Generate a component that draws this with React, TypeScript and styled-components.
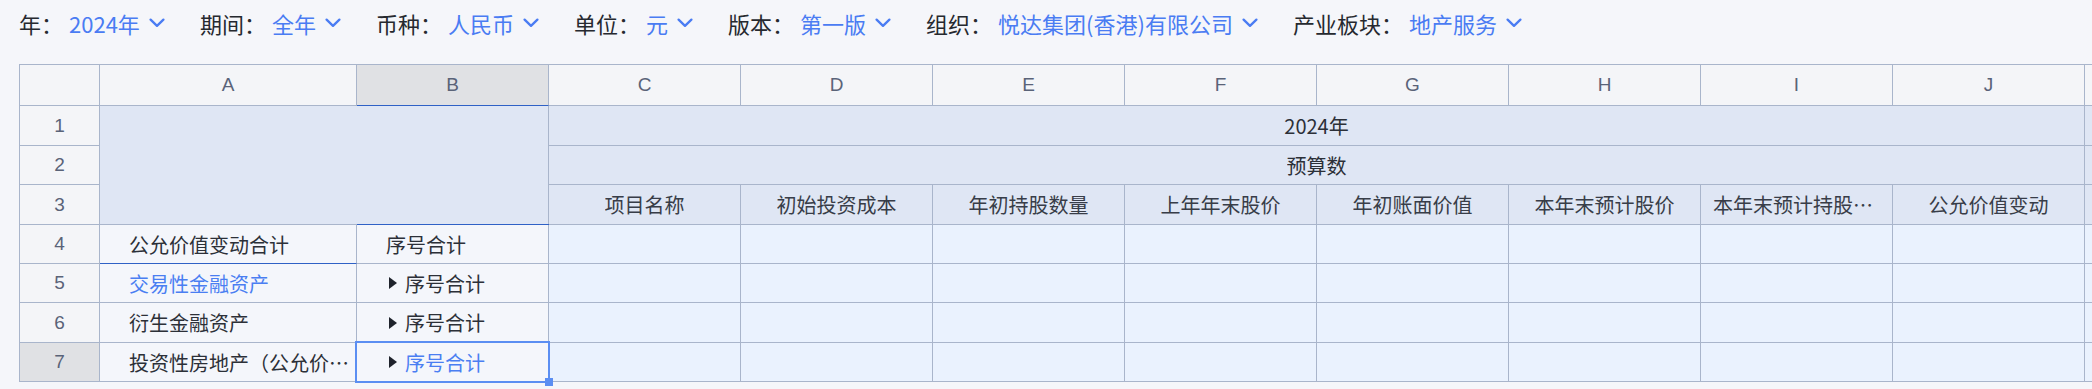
import React from "react";
import styled, { createGlobalStyle, css } from "styled-components";

const GlobalStyle = createGlobalStyle`
  html, body {
    margin: 0;
    padding: 0;
    background: #f5f6fa;
  }
  body {
    width: 2092px;
    height: 389px;
    overflow: hidden;
    font-family: "Noto Sans CJK SC", "Noto Sans", sans-serif;
  }
`;

const Page = styled.div`
  padding-left: 19px;
`;

const Toolbar = styled.div`
  height: 45px;
  display: flex;
  align-items: center;
  gap: 35px;
  font-size: 22px;
  color: #26292f;
`;

const Filter = styled.div`
  display: flex;
  align-items: center;
`;

const FilterLabel = styled.span`
  white-space: nowrap;
`;

const FilterValue = styled.span`
  margin-left: 6px;
  color: #4a7cf3;
  white-space: nowrap;
`;

const Chevron = styled.svg`
  margin-left: 9px;
  width: 16px;
  height: 10px;
  flex: none;
`;

const SheetViewport = styled.div`
  margin-top: 19px;
  width: 2073px;
  padding-bottom: 6px;
  overflow: hidden;
`;

const Sheet = styled.div`
  display: grid;
  width: max-content;
  grid-template-columns: 80px 257px 192px repeat(8, 192px) 40px;
  grid-template-rows: 41px 40px 39px 40px 39px 39px 40px 39px;
  border-top: 1px solid #a9b5cb;
  border-left: 1px solid #a9b5cb;
`;

type Tone = "head" | "headSel" | "band" | "label" | "data";

const toneBg: Record<Tone, string> = {
  head: "#f4f5f8",
  headSel: "#e0e1e4",
  band: "#dfe6f4",
  label: "#f4f6fb",
  data: "#eaf2fe",
};

const Cell = styled.div<{
  $tone: Tone;
  $align?: "center" | "left";
  $colSpan?: number;
  $rowSpan?: number;
  $accentBottom?: boolean;
}>`
  position: relative;
  box-sizing: border-box;
  min-width: 0;
  display: flex;
  align-items: center;
  justify-content: ${(p) => (p.$align === "left" ? "flex-start" : "center")};
  padding: ${(p) => (p.$align === "left" ? "0 6px 0 29px" : "0 12px")};
  background: ${(p) => toneBg[p.$tone]};
  border-right: 1px solid #a9b5cb;
  border-bottom: 1px solid ${(p) => (p.$accentBottom ? "#2f61c6" : "#a9b5cb")};
  font-size: 20px;
  color: #2c3038;
  ${(p) =>
    p.$colSpan &&
    css`
      grid-column: span ${p.$colSpan};
    `}
  ${(p) =>
    p.$rowSpan &&
    css`
      grid-row: span ${p.$rowSpan};
    `}
`;

const HeaderCell = styled(Cell)`
  font-family: "Liberation Sans", Arial, sans-serif;
  font-size: 19px;
  color: #5a6378;
`;

const Text = styled.span<{ $blue?: boolean; $muted?: boolean }>`
  min-width: 0;
  white-space: nowrap;
  overflow: hidden;
  text-overflow: ellipsis;
  color: ${(p) => (p.$blue ? "#4a7ef2" : p.$muted ? "#383d48" : "#2c3038")};
`;

const Caret = styled.span`
  flex: none;
  width: 0;
  height: 0;
  margin: 0 8px 0 3px;
  border-left: 8px solid #1e222b;
  border-top: 6px solid transparent;
  border-bottom: 6px solid transparent;
`;

const AccentTop = styled.span`
  position: absolute;
  z-index: 1;
  top: -1px;
  left: 0;
  right: -1px;
  height: 1px;
  background: #2f61c6;
`;

const Selection = styled.span`
  position: absolute;
  z-index: 3;
  top: -2px;
  left: -2px;
  right: -2px;
  bottom: -2px;
  box-sizing: border-box;
  border: 2px solid #5b8ef2;
  pointer-events: none;
`;

const FillHandle = styled.span`
  position: absolute;
  right: -5px;
  bottom: -5px;
  width: 8px;
  height: 8px;
  background: #5b8ef2;
`;

const filters = [
  { label: "年", value: "2024年" },
  { label: "期间", value: "全年" },
  { label: "币种", value: "人民币" },
  { label: "单位", value: "元" },
  { label: "版本", value: "第一版" },
  { label: "组织", value: "悦达集团(香港)有限公司" },
  { label: "产业板块", value: "地产服务" },
];

const columnLetters = ["A", "B", "C", "D", "E", "F", "G", "H", "I", "J", ""];

const measureHeads = [
  "项目名称",
  "初始投资成本",
  "年初持股数量",
  "上年年末股价",
  "年初账面价值",
  "本年末预计股价",
  "本年末预计持股数量",
  "公允价值变动",
];

const bodyRows = [
  { n: 4, a: "公允价值变动合计", aBlue: false, b: "序号合计", caret: false },
  { n: 5, a: "交易性金融资产", aBlue: true, b: "序号合计", caret: true },
  { n: 6, a: "衍生金融资产", aBlue: false, b: "序号合计", caret: true },
  { n: 7, a: "投资性房地产（公允价值计量）", aBlue: false, b: "序号合计", caret: true },
];

const dataCols = 9; // C..J plus the partially visible K

export default function App() {
  return (
    <>
      <GlobalStyle />
      <Page>
        <Toolbar>
          {filters.map((f) => (
            <Filter key={f.label}>
              <FilterLabel>{f.label}：</FilterLabel>
              <FilterValue>{f.value}</FilterValue>
              <Chevron viewBox="0 0 16 10">
                <polyline
                  points="1.6,1.6 8,7.8 14.4,1.6"
                  fill="none"
                  stroke="#4a7cf3"
                  strokeWidth="2.3"
                  strokeLinecap="round"
                  strokeLinejoin="round"
                />
              </Chevron>
            </Filter>
          ))}
        </Toolbar>

        <SheetViewport>
          <Sheet>
            {/* column header row */}
            <HeaderCell $tone="head" />
            {columnLetters.map((c, i) => (
              <HeaderCell
                key={`col-${i}`}
                $tone={c === "B" ? "headSel" : "head"}
                $accentBottom={c === "B"}
              >
                {c}
              </HeaderCell>
            ))}

            {/* row 1 */}
            <HeaderCell $tone="head">1</HeaderCell>
            <Cell $tone="band" $colSpan={2} $rowSpan={3} />
            <Cell $tone="band" $colSpan={8}>
              <Text>2024年</Text>
            </Cell>
            <Cell $tone="band" />

            {/* row 2 */}
            <HeaderCell $tone="head">2</HeaderCell>
            <Cell $tone="band" $colSpan={8}>
              <Text>预算数</Text>
            </Cell>
            <Cell $tone="band" />

            {/* row 3 */}
            <HeaderCell $tone="head">3</HeaderCell>
            {measureHeads.map((h) => (
              <Cell key={h} $tone="band">
                <Text $muted>{h}</Text>
              </Cell>
            ))}
            <Cell $tone="band" />

            {/* body rows */}
            {bodyRows.map((r) => {
              const selected = r.n === 7;
              return (
                <React.Fragment key={r.n}>
                  <HeaderCell $tone={selected ? "headSel" : "head"}>{r.n}</HeaderCell>
                  <Cell $tone="label" $align="left" $accentBottom={r.n === 4}>
                    <Text $blue={r.aBlue}>{r.a}</Text>
                  </Cell>
                  <Cell $tone="label" $align="left">
                    {r.n === 4 && <AccentTop />}
                    {r.caret && <Caret />}
                    <Text $blue={selected}>{r.b}</Text>
                    {selected && (
                      <Selection>
                        <FillHandle />
                      </Selection>
                    )}
                  </Cell>
                  {Array.from({ length: dataCols }).map((_, i) => (
                    <Cell key={i} $tone="data" />
                  ))}
                </React.Fragment>
              );
            })}
          </Sheet>
        </SheetViewport>
      </Page>
    </>
  );
}
